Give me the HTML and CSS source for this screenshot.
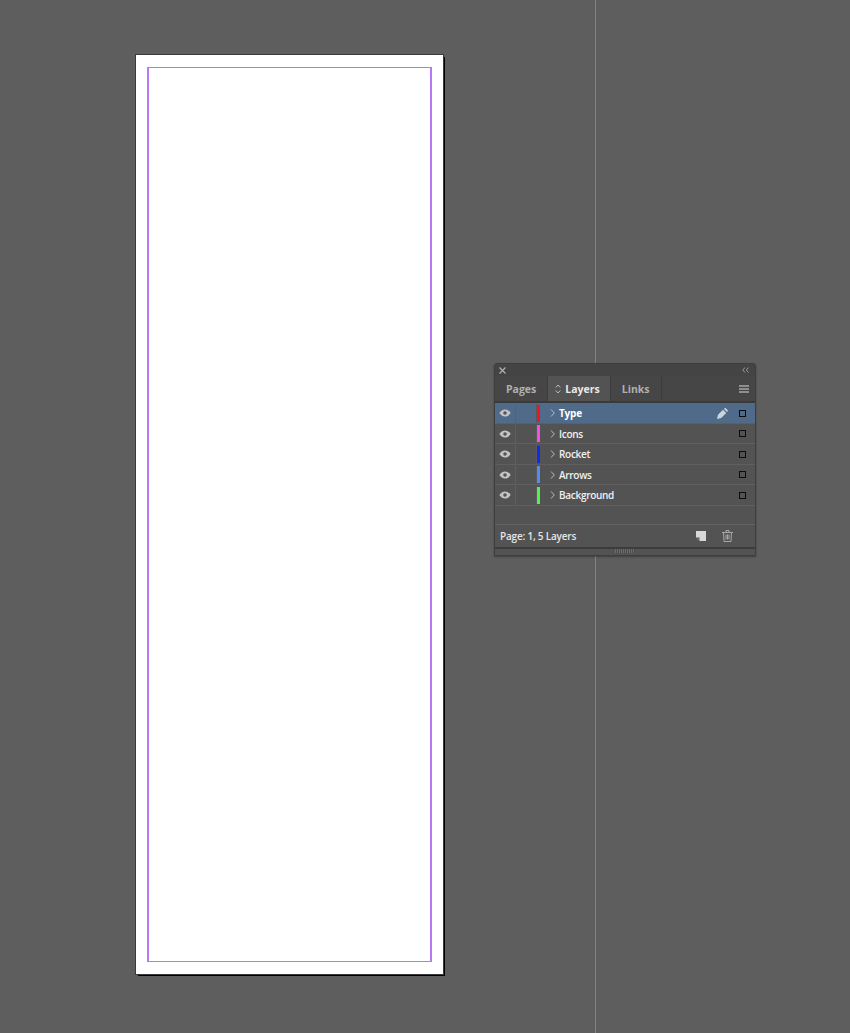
FILE: index.html
```html
<!DOCTYPE html>
<html lang="en">
<head>
    <meta charset="UTF-8">
    <meta name="viewport" content="width=device-width, initial-scale=1.0">
    <title>Layers</title>
    <link rel="stylesheet" href="styles.css">
</head>
<body>
    <div class="workspace">
        <div class="page"><div class="margins"></div></div>
        <div class="guide"></div>

        <div class="panel">
            <div class="title-bar">
                <svg width="7" height="7" viewBox="0 0 7 7"><path d="M.5.5l6 6M6.500.5l-6 6" stroke="#aeaeae" stroke-width="1.300"/></svg>
                <svg width="7" height="6" viewBox="0 0 7 6"><path d="M3 .5L.8 3 3 5.500M6.500.5L4.300 3l2.200 2.500" fill="none" stroke="#9a9a9a"/></svg>
            </div>

            <div class="tabs">
                <div class="tab">Pages</div>
                <div class="tab active">
                    <svg width="6" height="10" viewBox="0 0 6 10"><path d="M.7 3.500L3 1l2.300 2.500M.7 6.500L3 9l2.300-2.500" fill="none" stroke="#bbb"/></svg>
                    Layers
                </div>
                <div class="tab">Links</div>
                <div class="tab-fill">
                    <svg width="10" height="8" viewBox="0 0 10 8"><path d="M0 1h10M0 4h10M0 7h10" stroke="#a6a6a6" stroke-width="1.500"/></svg>
                </div>
            </div>

            <div class="rows">
                <div class="row selected">
                    <div class="cell-eye"><svg width="12" height="8" viewBox="0 0 12 8"><path d="M.3 4C2 1.500 4 .5 6 .5s4 1 5.700 3.500C10 6.500 8 7.500 6 7.500S2 6.500.3 4z" fill="#c4c4c4"/><circle cx="6" cy="4" r="1.800" fill="#555"/></svg></div>
                    <div class="cell-lock"></div>
                    <div class="swatch swatch-red"></div>
                    <svg class="chevron" width="5" height="8" viewBox="0 0 5 8"><path d="M1 .5L4.300 4 1 7.500" fill="none" stroke="#bbb"/></svg>
                    <span class="layer-name">Type</span>
                    <svg class="pen-icon" width="11" height="11" viewBox="0 0 11 11"><path d="M0 11l1-4.200L6 1.800 9.200 5 4.200 10z M7 .9L7.700.3c.4-.3.800-.3 1.100 0l1.900 1.900c.3.3.3.700 0 1.100L10 4z" fill="#ccd5de"/></svg>
                    <div class="target"></div>
                </div>
                <div class="row">
                    <div class="cell-eye"><svg width="12" height="8" viewBox="0 0 12 8"><path d="M.3 4C2 1.500 4 .5 6 .5s4 1 5.700 3.500C10 6.500 8 7.500 6 7.500S2 6.500.3 4z" fill="#c4c4c4"/><circle cx="6" cy="4" r="1.800" fill="#555"/></svg></div>
                    <div class="cell-lock"></div>
                    <div class="swatch swatch-pink"></div>
                    <svg class="chevron" width="5" height="8" viewBox="0 0 5 8"><path d="M1 .5L4.300 4 1 7.500" fill="none" stroke="#bbb"/></svg>
                    <span class="layer-name">Icons</span>
                    <div class="target"></div>
                </div>
                <div class="row">
                    <div class="cell-eye"><svg width="12" height="8" viewBox="0 0 12 8"><path d="M.3 4C2 1.500 4 .5 6 .5s4 1 5.700 3.500C10 6.500 8 7.500 6 7.500S2 6.500.3 4z" fill="#c4c4c4"/><circle cx="6" cy="4" r="1.800" fill="#555"/></svg></div>
                    <div class="cell-lock"></div>
                    <div class="swatch swatch-blue"></div>
                    <svg class="chevron" width="5" height="8" viewBox="0 0 5 8"><path d="M1 .5L4.300 4 1 7.500" fill="none" stroke="#bbb"/></svg>
                    <span class="layer-name">Rocket</span>
                    <div class="target"></div>
                </div>
                <div class="row">
                    <div class="cell-eye"><svg width="12" height="8" viewBox="0 0 12 8"><path d="M.3 4C2 1.500 4 .5 6 .5s4 1 5.700 3.500C10 6.500 8 7.500 6 7.500S2 6.500.3 4z" fill="#c4c4c4"/><circle cx="6" cy="4" r="1.800" fill="#555"/></svg></div>
                    <div class="cell-lock"></div>
                    <div class="swatch swatch-sky"></div>
                    <svg class="chevron" width="5" height="8" viewBox="0 0 5 8"><path d="M1 .5L4.300 4 1 7.500" fill="none" stroke="#bbb"/></svg>
                    <span class="layer-name">Arrows</span>
                    <div class="target"></div>
                </div>
                <div class="row">
                    <div class="cell-eye"><svg width="12" height="8" viewBox="0 0 12 8"><path d="M.3 4C2 1.500 4 .5 6 .5s4 1 5.700 3.500C10 6.500 8 7.500 6 7.500S2 6.500.3 4z" fill="#c4c4c4"/><circle cx="6" cy="4" r="1.800" fill="#555"/></svg></div>
                    <div class="cell-lock"></div>
                    <div class="swatch swatch-green"></div>
                    <svg class="chevron" width="5" height="8" viewBox="0 0 5 8"><path d="M1 .5L4.300 4 1 7.500" fill="none" stroke="#bbb"/></svg>
                    <span class="layer-name">Background</span>
                    <div class="target"></div>
                </div>
            </div>

            <div class="footer">
                <span class="footer-text">Page: 1, 5 Layers</span>
                <svg class="new-icon" width="10" height="10" viewBox="0 0 10 10"><path d="M0 0h10v10H3.500V6.500H0z" fill="#d8d8d8"/><path d="M1 7.500h1.500V9z" fill="#aaa"/></svg>
                <svg width="11" height="12" viewBox="0 0 11 12"><path d="M0 2.500h11M4 2.500V.5h3v2M1.500 2.500l.5 9h7l.5-9M4 4.500v5M5.500 4.500v5M7 4.500v5" fill="none" stroke="#a8a8a8"/></svg>
            </div>

            <div class="grip-bar"><div class="grip"></div></div>
        </div>
    </div>
</body>
</html>
```
FILE: styles.css
```css
* {
    margin: 0;
    padding: 0;
    box-sizing: border-box;
}

body {
    background: #5e5e5e;
    font-family: "Open Sans", "Liberation Sans", sans-serif;
    overflow: hidden;
}

.workspace {
    position: relative;
    width: 850px;
    height: 1033px;
}

/* document page and guide sit on a free canvas */
.page {
    position: absolute;
    left: 136px;
    top: 55px;
    width: 307px;
    height: 919px;
    background: #fff;
    outline: 1px solid #3a3a3a;
    box-shadow: 2px 2px 0 #000;
    padding: 12px 11px;
}

.margins {
    height: 100%;
    border: 1px solid #c56ff0;
    border-left: 2px solid #b878f5;
    border-right: 2px solid #b878f5;
}

.guide {
    position: absolute;
    left: 595px;
    top: 0;
    width: 1px;
    height: 1033px;
    background: #e8546e;
}

.panel {
    position: absolute;
    left: 494px;
    top: 363px;
    width: 262px;
    height: 193px;
    background: #535353;
    border: 1px solid #3e3e3e;
    border-radius: 3px 3px 0 0;
    box-shadow: 0 1px 2px rgba(0, 0, 0, 0.35);
    display: flex;
    flex-direction: column;
}

.title-bar {
    height: 12px;
    flex-shrink: 0;
    background: #444;
    display: flex;
    align-items: center;
    justify-content: space-between;
    padding: 0 6px 0 4px;
}

.tabs {
    height: 25px;
    flex-shrink: 0;
    background: #464646;
    display: flex;
}

.tab {
    display: flex;
    align-items: center;
    gap: 4px;
    padding: 0 11px;
    font-size: 10.5px;
    font-weight: 700;
    color: #b0b0b0;
    border-right: 1px solid #3c3c3c;
}

.tab.active {
    background: #535353;
    color: #e8e8e8;
    padding: 0 10px 0 7px;
}

.tab-fill {
    flex-grow: 1;
    display: flex;
    align-items: center;
    justify-content: flex-end;
    padding-right: 6px;
}

.rows {
    flex-grow: 1;
    border-top: 2px solid #3a3a3a;
    border-bottom: 1px solid #636363;
}

.row {
    height: 20.5px;
    display: flex;
    align-items: center;
    border-bottom: 1px solid #5f5f5f;
    padding-top: 1px;
    font-size: 10px;
    font-weight: 600;
    letter-spacing: -0.3px;
    color: #f0f0f0;
}

.row.selected {
    background: #4f6b89;
    font-weight: 700;
    letter-spacing: -0.2px;
    color: #fff;
}

.cell-eye {
    width: 21px;
    height: 100%;
    display: flex;
    align-items: center;
    justify-content: center;
    border-right: 1px solid #5f5f5f;
}

.cell-lock {
    width: 21px;
    height: 100%;
    border-right: 1px solid #5a5a5a;
}

.swatch {
    width: 3px;
    height: 17px;
}

.swatch-red { background: #f01428; }
.swatch-pink { background: #f050e6; }
.swatch-blue { background: #1428f0; }
.swatch-sky { background: #4f8cf5; }
.swatch-green { background: #50f050; }

.chevron {
    margin: 0 4px 0 10px;
}

.layer-name {
    flex-grow: 1;
}

.pen-icon {
    margin-right: 11px;
}

.target {
    width: 7px;
    height: 7px;
    border: 1px solid #0c0c0c;
    margin-right: 9px;
}

.footer {
    height: 22px;
    flex-shrink: 0;
    display: flex;
    align-items: center;
    padding: 0 22px 0 5px;
    font-size: 10px;
    font-weight: 600;
    letter-spacing: -0.2px;
    color: #e6e6e6;
}

.footer-text {
    flex-grow: 1;
}

.new-icon {
    margin-right: 16px;
}

.grip-bar {
    height: 8px;
    flex-shrink: 0;
    border-top: 2px solid #3c3c3c;
    display: flex;
    justify-content: center;
}

.grip {
    width: 20px;
    height: 4px;
    background: repeating-linear-gradient(90deg, #6c6c6c 0 1px, #4c4c4c 1px 2px);
}
```
